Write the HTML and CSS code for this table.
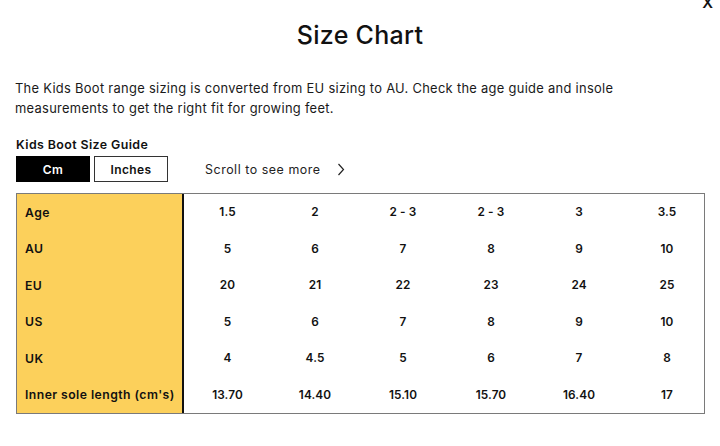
FILE: index.html
```html
<!DOCTYPE html>
<html lang="en">
<head>
<meta charset="utf-8">
<title>Size Chart</title>
<link rel="stylesheet" href="styles.css">
</head>
<body>
<div class="modal">
  <button class="close" aria-label="Close">X</button>
  <h1 class="title">Size Chart</h1>
  <p class="intro">The Kids Boot range sizing is converted from EU sizing to AU. Check the age guide and insole measurements to get the right fit for growing feet.</p>
  <h2 class="guide">Kids Boot Size Guide</h2>
  <div class="controls">
    <div class="units">
      <button class="unit active">Cm</button>
      <button class="unit">Inches</button>
    </div>
    <div class="scroll-hint">
      <span>Scroll to see more</span>
      <svg width="8" height="13" viewBox="0 0 8 13" aria-hidden="true"><path d="M1.5 1 L6.5 6.5 L1.5 12" fill="none" stroke="#222" stroke-width="1.2"/></svg>
    </div>
  </div>
  <div class="table-wrap">
    <table class="chart">
      <tr><th>Age</th><td>1.5</td><td>2</td><td>2 - 3</td><td>2 - 3</td><td>3</td><td>3.5</td></tr>
      <tr><th>AU</th><td>5</td><td>6</td><td>7</td><td>8</td><td>9</td><td>10</td></tr>
      <tr><th>EU</th><td>20</td><td>21</td><td>22</td><td>23</td><td>24</td><td>25</td></tr>
      <tr><th>US</th><td>5</td><td>6</td><td>7</td><td>8</td><td>9</td><td>10</td></tr>
      <tr><th>UK</th><td>4</td><td>4.5</td><td>5</td><td>6</td><td>7</td><td>8</td></tr>
      <tr><th>Inner sole length (cm's)</th><td>13.70</td><td>14.40</td><td>15.10</td><td>15.70</td><td>16.40</td><td>17</td></tr>
    </table>
  </div>
</div>
</body>
</html>
```
FILE: styles.css
```css
* { box-sizing: border-box; }
html, body { margin: 0; padding: 0; background: #fff; }
body {
  font-family: Inter, "Open Sans", "Liberation Sans", sans-serif;
  color: #111;
  width: 720px;
  height: 446px;
  overflow: hidden;
}
.modal {
  position: relative;
  padding: 20px 16px 0 16px;
}
.close {
  position: absolute;
  top: -5px;
  right: 7px;
  border: 0;
  background: none;
  padding: 0;
  font-family: Inter, sans-serif;
  font-weight: 600;
  font-size: 15px;
  line-height: 16px;
  color: #111;
}
.title {
  margin: 0;
  text-align: center;
  font-size: 25px;
  line-height: 30px;
  font-weight: 500;
  letter-spacing: 0.3px;
}
.intro {
  margin: 29px 0 0 -1px;
  max-width: 630px;
  font-size: 12.9px;
  line-height: 20px;
  letter-spacing: 0.3px;
  color: #1a1a1a;
}
.guide {
  margin: 18px 0 0 0;
  font-size: 12.4px;
  line-height: 16px;
  font-weight: 600;
  letter-spacing: 0.4px;
}
.controls {
  display: flex;
  align-items: center;
  margin-top: 3px;
}
.units { display: flex; gap: 4px; }
.unit {
  width: 74px;
  height: 26px;
  border: 1px solid #333;
  background: #fff;
  color: #111;
  font-family: Inter, sans-serif;
  font-size: 12px;
  font-weight: 600;
  letter-spacing: 0.4px;
  padding: 0;
}
.unit.active { background: #000; color: #fff; border-color: #000; }
.scroll-hint {
  display: flex;
  align-items: center;
  gap: 16px;
  margin-left: 37px;
  font-size: 12.4px;
  letter-spacing: 0.55px;
  color: #222;
}
.table-wrap {
  margin-top: 11px;
  width: 689px;
  border: 1px solid #7a7a7a;
  overflow: hidden;
}
.chart {
  border-collapse: collapse;
  table-layout: fixed;
  width: 694px;
}
.chart th, .chart td {
  height: 36.5px;
  padding: 0;
  font-size: 11.8px;
  font-weight: 600;
}
.chart th {
  width: 166px;
  background: #fcd05b;
  border-right: 2px solid #111;
  text-align: left;
  padding-left: 8px;
  font-size: 12.2px;
  letter-spacing: 0.45px;
}
.chart td {
  width: 88px;
  text-align: center;
  letter-spacing: 0.1px;
}
```
